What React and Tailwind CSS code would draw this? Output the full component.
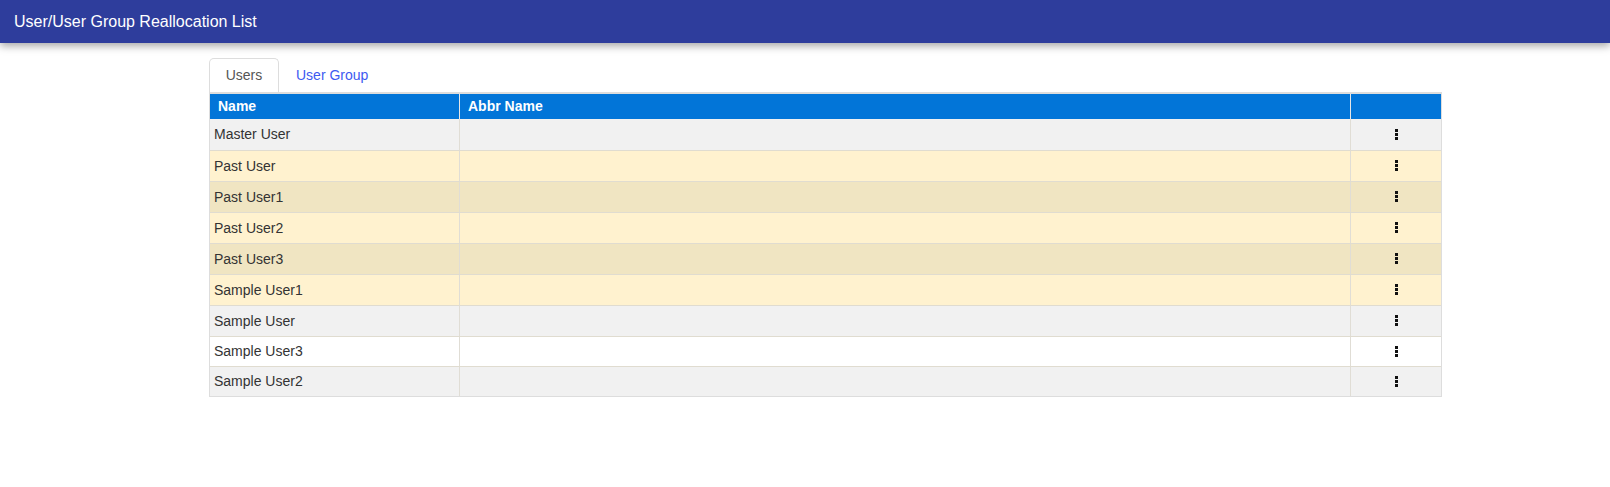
const rows = [
  { name: 'Master User', bg: 'bg-[#f1f1f1]' },
  { name: 'Past User', bg: 'bg-[#fff2cf]' },
  { name: 'Past User1', bg: 'bg-[#f0e5c2]' },
  { name: 'Past User2', bg: 'bg-[#fff2cf]' },
  { name: 'Past User3', bg: 'bg-[#f0e5c2]' },
  { name: 'Sample User1', bg: 'bg-[#fff2cf]' },
  { name: 'Sample User', bg: 'bg-[#f1f1f1]' },
  { name: 'Sample User3', bg: 'bg-white' },
  { name: 'Sample User2', bg: 'bg-[#f1f1f1]' },
];

function Dots() {
  return (
    <div className="flex flex-col gap-px -mt-px">
      <span className="w-[3px] h-[3px] bg-[#111]" />
      <span className="w-[3px] h-[3px] bg-[#111]" />
      <span className="w-[3px] h-[3px] bg-[#111]" />
    </div>
  );
}

export default function App() {
  return (
    <div className="min-h-[487px] bg-white font-['Liberation_Sans',Arial,sans-serif] text-[14px] text-[#333]">
      {/* Title bar */}
      <div className="h-[43px] bg-[#2e3d9c] flex items-center px-[14px] shadow-[0_3px_8px_rgba(0,0,0,0.35)] relative">
        <h1 className="text-white text-[16px]">User/User Group Reallocation List</h1>
      </div>

      <div className="ml-[209px] w-[1233px] mt-[15px]">
        {/* Tabs */}
        <div className="flex h-[34px]">
          <div className="w-[70px] border border-b-0 border-[#ddd] rounded-t-[5px] flex items-center justify-center text-[#555] bg-white">
            Users
          </div>
          <div className="px-[17px] flex items-center text-[#3d5af1]">User Group</div>
        </div>

        {/* Table */}
        <div className="border border-[#ddd] border-t-0">
          <div className="flex h-[27px] bg-[#0275d8] text-white font-bold border-t-[2px] border-[#ddd]">
            <div className="w-[250px] px-[8px] flex items-center border-r border-[#e6e6e6]">Name</div>
            <div className="flex-1 px-[8px] flex items-center border-r border-[#e6e6e6]">Abbr Name</div>
            <div className="w-[90px]" />
          </div>
          {rows.map((r, i) => (
            <div key={r.name} className={`flex ${i < 7 ? 'h-[31px]' : 'h-[30px]'} ${r.bg} ${i > 0 ? 'border-t border-[#e0dcd0]' : ''}`}>
              <div className="w-[250px] px-[4px] flex items-center border-r border-[#e0ddd5]">{r.name}</div>
              <div className="flex-1 border-r border-[#e0ddd5]" />
              <div className="w-[90px] flex items-center justify-center">
                <Dots />
              </div>
            </div>
          ))}
        </div>
      </div>
    </div>
  );
}
